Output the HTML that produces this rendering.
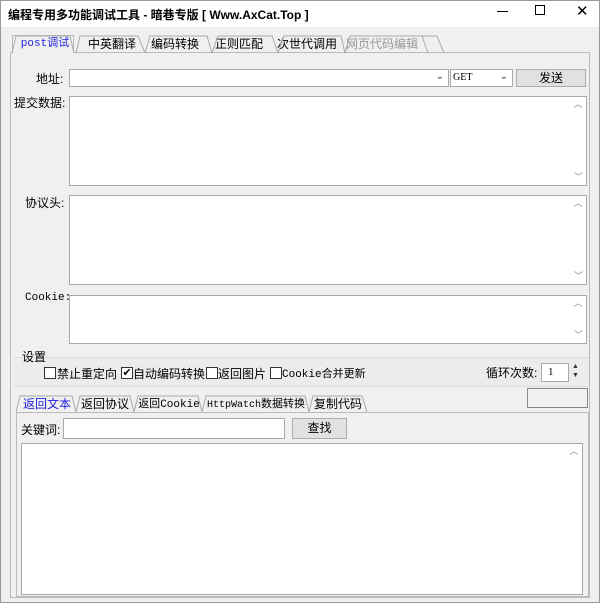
<html><head><style>
body{margin:0;width:600px;height:603px;background:#f0f0f0;font-family:"Liberation Sans","Noto Sans CJK SC",sans-serif;font-size:12px;color:#000;position:relative;overflow:hidden}
div,span{position:absolute;box-sizing:border-box}
.b{border:1px solid #a9a9a9;background:#fff}
.t{white-space:nowrap}
.btn{border:1px solid #adadad;background:#e1e1e1;text-align:center}
.sb{position:absolute;right:0;top:0;bottom:0;width:16px;background:#fff;color:#888;font-size:9px;text-align:center}
.cb{width:12px;height:12px;border:1px solid #333;background:#fff;font-size:11px;line-height:10px;text-align:center}
.tl{white-space:nowrap;text-align:center;line-height:17px}
</style></head><body>
<div style="left:0;top:0;width:600px;height:603px;border:1px solid #999"></div>
<div style="left:1px;top:1px;width:598px;height:26px;background:#fff"></div>
<div class="t" style="left:8px;top:6px;font-weight:bold;font-size:12px">编程专用多功能调试工具 - 暗巷专版 [ Www.AxCat.Top ]</div>
<div style="left:497px;top:11px;width:11px;height:1px;background:#000"></div>
<div style="left:535px;top:5px;width:10px;height:10px;border:1px solid #000"></div>
<div class="t" style="left:576px;top:2px;font-size:15px">✕</div>

<div style="left:10px;top:52px;width:580px;height:546px;border:1px solid #bbb;background:#f0f0f0"></div>
<div style="left:12px;top:35px;width:62px;height:18px;border:1px solid #bbb;border-bottom:none;background:#f0f0f0"></div>
<div class="tl" style="left:18px;top:36px;width:54px;color:#2020e0;font-family:'Liberation Mono','Noto Sans CJK SC',monospace;font-size:11px">post调试</div>
<div class="tl" style="left:78px;top:36px;width:68px">中英翻译</div>
<div class="tl" style="left:143px;top:36px;width:64px">编码转换</div>
<div class="tl" style="left:207px;top:36px;width:64px">正则匹配</div>
<div class="tl" style="left:272px;top:36px;width:70px">次世代调用</div>
<div class="tl" style="left:340px;top:36px;width:84px;color:#999">网页代码编辑</div>
<svg style="position:absolute;left:0;top:33px" width="600" height="22"><path d="M74 20 L70 3 M76 20 L80 3 H138 L145 20 M145 20 L150 3 H207 L212 20 M212 20 L218 3 H272 L278 20 M278 20 L284 3 H341 L345 20 M345 20 L350 3 H422 L428 20 M422 3 H437 L444 20 M12 20 L16 3 H70" stroke="#aaa" fill="none"/></svg>

<div class="t" style="left:36px;top:70px">地址:</div>
<div class="b" style="left:69px;top:69px;width:380px;height:18px"><span style="right:4px;top:1px;font-size:10px;color:#444">⌄</span></div>
<div class="b" style="left:450px;top:69px;width:63px;height:18px;font-size:10px;padding:2px 2px;font-family:'Liberation Serif'">GET<span style="right:4px;top:1px;color:#444">⌄</span></div>
<div class="btn" style="left:516px;top:69px;width:70px;height:18px;line-height:16px">发送</div>

<div class="t" style="left:14px;top:94px">提交数据:</div>
<div class="b" style="left:69px;top:96px;width:518px;height:90px"><div class="sb">︿<span style="bottom:2px;left:4px">﹀</span></div></div>
<div class="t" style="left:25px;top:194px">协议头:</div>
<div class="b" style="left:69px;top:195px;width:518px;height:90px"><div class="sb">︿<span style="bottom:2px;left:4px">﹀</span></div></div>
<div class="t" style="left:25px;top:292px;font-family:'Liberation Mono';font-size:11px">Cookie:</div>
<div class="b" style="left:69px;top:295px;width:518px;height:49px"><div class="sb">︿<span style="bottom:2px;left:4px">﹀</span></div></div>

<div style="left:14px;top:357px;width:575px;height:30px;border-top:1px solid #ddd;border-bottom:1px solid #ddd;background:#ececec"></div>
<div class="t" style="left:22px;top:348px">设置</div>
<div class="cb" style="left:44px;top:367px"></div><div class="t" style="left:57px;top:365px">禁止重定向</div>
<div class="cb" style="left:121px;top:367px">✔</div><div class="t" style="left:133px;top:365px">自动编码转换</div>
<div class="cb" style="left:206px;top:367px"></div><div class="t" style="left:218px;top:365px">返回图片</div>
<div class="cb" style="left:270px;top:367px"></div><div class="t" style="left:282px;top:365px;font-family:'Liberation Mono','Noto Sans CJK SC';font-size:11px">Cookie合并更新</div>
<div class="t" style="left:486px;top:364px">循环次数:</div>
<div class="b" style="left:541px;top:363px;width:28px;height:19px;font-size:11px;padding:2px 6px;font-family:'Liberation Serif'">1</div>
<div class="t" style="left:572px;top:362px;font-size:7px;line-height:9px;color:#333">▲<br>▼</div>
<div style="left:527px;top:388px;width:61px;height:20px;border:1px solid #888;background:#f0f0f0"></div>

<div style="left:16px;top:412px;width:573px;height:185px;border:1px solid #bbb"></div>
<svg style="position:absolute;left:0;top:394px" width="600" height="20"><path d="M16 18 L20 2 H72 L76 18 M76 18 L80 2 H130 L134 18 M134 18 L138 2 H198 L202 18 M202 18 L206 2 H305 L309 18 M309 18 L313 2 H362 L367 18" stroke="#aaa" fill="none"/></svg>
<div class="tl" style="left:20px;top:396px;width:54px;color:#2020e0">返回文本</div>
<div class="tl" style="left:78px;top:396px;width:54px">返回协议</div>
<div class="tl" style="left:138px;top:396px;width:62px;font-size:11px">返回<span style="position:static;font-family:'Liberation Mono'">Cookie</span></div>
<div class="tl" style="left:205px;top:396px;width:102px;font-size:11px"><span style="position:static;font-family:'Liberation Mono';font-size:10px">HttpWatch</span>数据转换</div>
<div class="tl" style="left:311px;top:396px;width:54px">复制代码</div>

<div class="t" style="left:21px;top:421px">关键词:</div>
<div class="b" style="left:63px;top:418px;width:222px;height:21px"></div>
<div class="btn" style="left:292px;top:418px;width:55px;height:21px;line-height:19px">查找</div>
<div class="b" style="left:21px;top:443px;width:562px;height:152px"><div class="sb">︿</div></div>
</body></html>
